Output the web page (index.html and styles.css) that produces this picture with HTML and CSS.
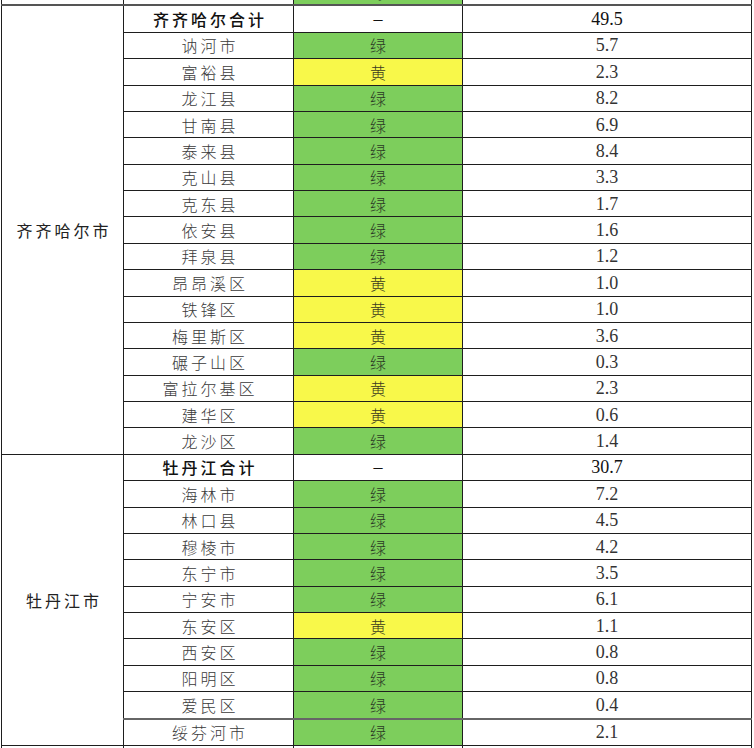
FILE: index.html
```html
<!DOCTYPE html>
<html lang="zh">
<head>
<meta charset="utf-8">
<link rel="stylesheet" href="styles.css">
</head>
<body>
<div class="page">
<table class="sheet">
<colgroup><col class="c1"><col class="c2"><col class="c3"><col class="c4"></colgroup>
<tbody>
<tr class="partial"><td></td><td class="name"></td><td class="green">绿</td><td class="num"></td></tr>
<tr class="sum first"><td class="city" rowspan="17">齐齐哈尔市</td><td class="name">齐齐哈尔合计</td><td class="flag">–</td><td class="num">49.5</td></tr>
<tr><td class="name">讷河市</td><td class="green">绿</td><td class="num">5.7</td></tr>
<tr><td class="name">富裕县</td><td class="yellow">黄</td><td class="num">2.3</td></tr>
<tr><td class="name">龙江县</td><td class="green">绿</td><td class="num">8.2</td></tr>
<tr><td class="name">甘南县</td><td class="green">绿</td><td class="num">6.9</td></tr>
<tr><td class="name">泰来县</td><td class="green">绿</td><td class="num">8.4</td></tr>
<tr><td class="name">克山县</td><td class="green">绿</td><td class="num">3.3</td></tr>
<tr><td class="name">克东县</td><td class="green">绿</td><td class="num">1.7</td></tr>
<tr><td class="name">依安县</td><td class="green">绿</td><td class="num">1.6</td></tr>
<tr><td class="name">拜泉县</td><td class="green">绿</td><td class="num">1.2</td></tr>
<tr><td class="name">昂昂溪区</td><td class="yellow">黄</td><td class="num">1.0</td></tr>
<tr><td class="name">铁锋区</td><td class="yellow">黄</td><td class="num">1.0</td></tr>
<tr><td class="name">梅里斯区</td><td class="yellow">黄</td><td class="num">3.6</td></tr>
<tr><td class="name">碾子山区</td><td class="green">绿</td><td class="num">0.3</td></tr>
<tr><td class="name">富拉尔基区</td><td class="yellow">黄</td><td class="num">2.3</td></tr>
<tr><td class="name">建华区</td><td class="yellow">黄</td><td class="num">0.6</td></tr>
<tr><td class="name">龙沙区</td><td class="green">绿</td><td class="num">1.4</td></tr>
<tr class="sum"><td class="city" rowspan="11">牡丹江市</td><td class="name">牡丹江合计</td><td class="flag">–</td><td class="num">30.7</td></tr>
<tr><td class="name">海林市</td><td class="green">绿</td><td class="num">7.2</td></tr>
<tr><td class="name">林口县</td><td class="green">绿</td><td class="num">4.5</td></tr>
<tr><td class="name">穆棱市</td><td class="green">绿</td><td class="num">4.2</td></tr>
<tr><td class="name">东宁市</td><td class="green">绿</td><td class="num">3.5</td></tr>
<tr><td class="name">宁安市</td><td class="green">绿</td><td class="num">6.1</td></tr>
<tr><td class="name">东安区</td><td class="yellow">黄</td><td class="num">1.1</td></tr>
<tr><td class="name">西安区</td><td class="green">绿</td><td class="num">0.8</td></tr>
<tr><td class="name">阳明区</td><td class="green">绿</td><td class="num">0.8</td></tr>
<tr><td class="name">爱民区</td><td class="green">绿</td><td class="num">0.4</td></tr>
<tr class="heavy"><td class="name">绥芬河市</td><td class="green">绿</td><td class="num">2.1</td></tr>
<tr class="partial"><td></td><td class="name"></td><td></td><td class="num"></td></tr>
</tbody>
</table>
</div>
</body>
</html>
```

FILE: styles.css
```css
html, body {
  margin: 0;
  padding: 0;
  background: #fff;
}
.page {
  width: 754px;
  height: 748px;
  overflow: hidden;
}
.sheet {
  margin: -22px 0 0 1px;
  width: 750px;
  table-layout: fixed;
  border-collapse: collapse;
  font-family: "Noto Sans CJK SC", sans-serif;
  font-size: 16px;
  color: #3a3a3a;
}
.c1 { width: 122px; }
.c2 { width: 170px; }
.c3 { width: 169px; }
.c4 { width: 289px; }
.sheet td {
  border: 1px solid #1e1e1e;
  height: 25.38px;
  padding: 0;
  text-align: center;
  vertical-align: middle;
  line-height: 20px;
  white-space: nowrap;
  overflow: hidden;
}
.name, .city, .green, .yellow {
  letter-spacing: 3px;
  text-indent: 3px;
  font-weight: 300;
}
.city {
  color: #222;
  font-weight: 400;
}
.green { background: #7dce5c; color: #2b3a25; }
.yellow { background: #f8f84a; color: #3a3a20; }
.num, .flag {
  font-family: "Liberation Serif", serif;
  font-size: 18px;
  color: #333;
}
.sum .name {
  color: #111;
  font-weight: 500;
}
.sum .num, .sum .flag {
  color: #111;
}
.first td { border-top: 2px solid #555; }
.heavy td { border-top: 2px solid #666; }
```
